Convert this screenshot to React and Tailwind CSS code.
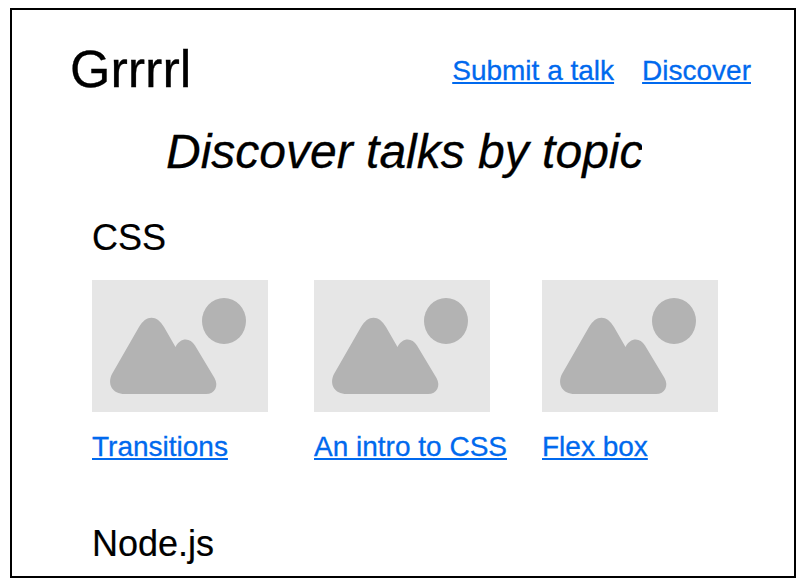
const link = "text-[#0069ee] underline decoration-2 underline-offset-[2px] [text-decoration-skip-ink:none] [-webkit-text-stroke:0.3px_#0069ee] text-[28px] leading-[36px] whitespace-nowrap block";
const heading = "text-[36px] leading-[42px] [-webkit-text-stroke:0.2px_black]";

function Placeholder() {
  return (
    <svg className="block h-[132px] w-[176px]" viewBox="0 0 176 132">
      <rect width="176" height="132" fill="#e6e6e6" />
      <ellipse cx="132" cy="41" rx="22" ry="23" fill="#b3b3b3" />
      <path d="M20 94 L47 47 C54 34.5 65 34.5 72 47 L83.5 67 C88 57.5 98 57 103 65.500 L122.500 98 C127 106 123 114 114 114 H33 C20 114 15 104 20 94Z" fill="#b3b3b3" />
    </svg>
  );
}

function Talk({ title }) {
  return (
    <article>
      <Placeholder />
      <a className={`${link} mt-[17px]`}>{title}</a>
    </article>
  );
}

export default function App() {
  return (
    <div className="h-[584px] w-[804px] overflow-hidden bg-white pt-2 pl-[10px] font-['Liberation_Sans',sans-serif] text-black">
      <div className="h-[570px] w-[786px] border-2 border-black">
        <header className="flex h-[91px] justify-between pt-[29px] pr-[43px] pl-[58px]">
          <div className="text-[52px] leading-[60px] [-webkit-text-stroke:0.3px_black]">Grrrrl</div>
          <nav className="flex gap-7 pt-[14px]">
            <a className={link}>Submit a talk</a>
            <a className={link}>Discover</a>
          </nav>
        </header>
        <h1 className="mt-[23px] ml-[154px] w-[476px] overflow-hidden text-[48px] leading-[56px] whitespace-nowrap italic [-webkit-text-stroke:0.3px_black]">Discover talks by topic</h1>
        <main className="pl-[80px]">
          <h2 className={`${heading} mt-[37px]`}>CSS</h2>
          <div className="mt-[21px] grid grid-cols-[222px_228px_176px]">
            <Talk title="Transitions" />
            <Talk title="An intro to CSS" />
            <Talk title="Flex box" />
          </div>
          <h2 className={`${heading} mt-[58px]`}>Node.js</h2>
        </main>
      </div>
    </div>
  );
}
